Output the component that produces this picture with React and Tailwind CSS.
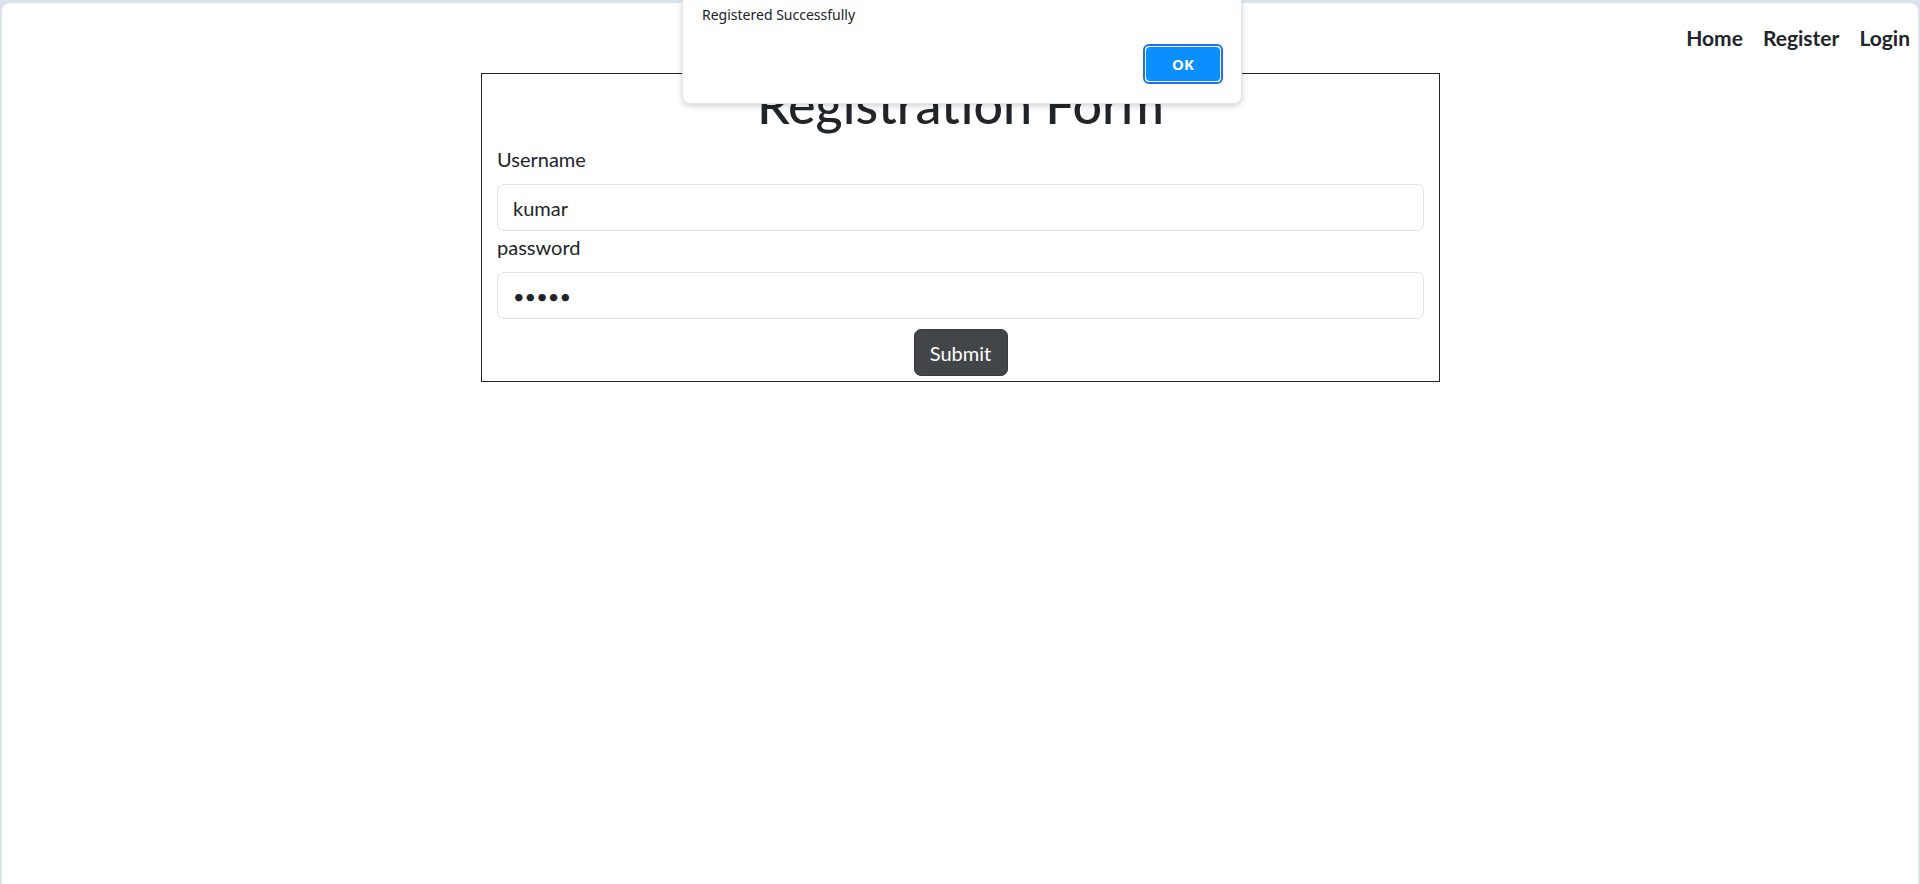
import React from "react";

export default function App() {
  const font = { fontFamily: "Lato, 'Noto Sans', sans-serif" };
  return (
    <div className="h-[884px] w-full bg-[#dae3ec] pt-[3px] px-[2px] overflow-hidden relative" style={font}>
      <div className="h-[881px] bg-white rounded-t-[8px] flex flex-col">
        <nav className="flex justify-end gap-[20px] pr-[8px] pt-[20px] h-[70px] text-[21px] font-bold text-[#212529] leading-[30px]">
          <a>Home</a>
          <a>Register</a>
          <a>Login</a>
        </nav>
        <div className="w-[959px] border border-[#212529] px-[15px] pb-[5px] text-[#212529]" style={{ marginLeft: 479 }}>
          <h1 className="text-[52px] leading-[60px] font-medium text-center mb-[10px]">Registration Form</h1>
          <label className="block text-[20px] leading-[30px] mb-[10px]">Username</label>
          <input
            readOnly
            value="kumar"
            className="block w-full h-[47px] border border-[#dee2e6] rounded-[7px] px-[15px] text-[20px] leading-[30px] text-[#212529] outline-none"
            style={font}
          />
          <label className="block text-[20px] leading-[30px] mb-[10px] mt-[1px]">password</label>
          <input
            readOnly
            type="password"
            value="kumar"
            className="block w-full h-[47px] border border-[#dee2e6] rounded-[7px] px-[15px] text-[20px] leading-[30px] text-[#212529] outline-none"
            style={font}
          />
          <div className="flex justify-center mt-[10px]">
            <button className="h-[47px] w-[94px] bg-[#424649] border border-[#373b3e] text-white text-[20px] rounded-[7px]">Submit</button>
          </div>
        </div>
      </div>
      <div className="absolute top-0 left-[682px] w-[560px] h-[104px] bg-white rounded-b-[8px] shadow-[0_2px_6px_rgba(0,0,0,0.18)] border border-t-0 border-[#e5e5e5]">
        <div className="pl-[19px] pt-[5px] text-[14px] leading-[20px] text-[#202124]" style={{ fontFamily: "'Noto Sans', sans-serif" }}>Registered Successfully</div>
        <div className="absolute right-[18px] top-[44px] w-[80px] h-[40px] rounded-[6px] border-2 border-[#1a73e8] p-[1px]">
          <div className="w-full h-full bg-[#0b8fff] rounded-[4px] flex items-center justify-center text-white font-bold text-[15px]" style={{ fontFamily: "'Noto Sans', sans-serif" }}>OK</div>
        </div>
      </div>
    </div>
  );
}
